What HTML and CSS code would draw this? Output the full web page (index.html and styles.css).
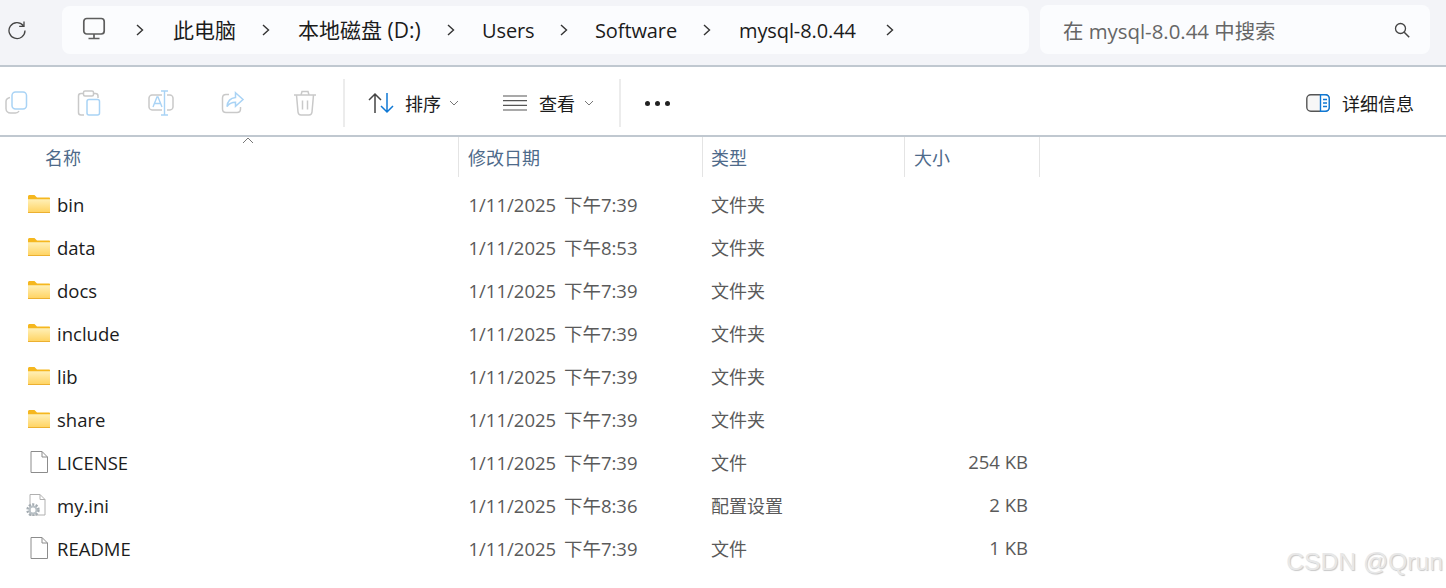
FILE: index.html
```html
<!DOCTYPE html>
<html lang="zh">
<head>
<meta charset="utf-8">
<title>mysql-8.0.44</title>
<link rel="stylesheet" href="styles.css">
</head>
<body>
<svg class="defs" width="0" height="0" aria-hidden="true">
  <defs>
    <linearGradient id="fg" x1="0" y1="0" x2="0" y2="1">
      <stop offset="0" stop-color="#fff0b8"/><stop offset="1" stop-color="#ffd25e"/>
    </linearGradient>
    <symbol id="folder" viewBox="0 0 22 18">
      <path d="M0 3V1.500C0 .7.700 0 1.500 0h5L9 2.500h12c.6 0 1 .4 1 1V5H0z" fill="#f5b71f"/>
      <path d="M0 4.200h22V17c0 .6-.4 1-1 1H1c-.6 0-1-.4-1-1z" fill="url(#fg)"/>
      <path d="M0 17h22v1H0z" fill="#ecb030"/>
    </symbol>
    <symbol id="file" viewBox="0 0 18 22">
      <path d="M1 .5h11l5.500 5.500v15.500H1z" fill="#fff" stroke="#8c8c8c"/>
      <path d="M12 .5v5.500h5.500" fill="none" stroke="#8c8c8c"/>
    </symbol>
    <symbol id="ini" viewBox="0 0 20 22">
      <path d="M4 .5h10l5 5v15.500H4z" fill="#fff" stroke="#b0b0b0"/>
      <path d="M14 .5v5h5" fill="none" stroke="#b0b0b0"/>
      <circle cx="7" cy="16" r="5.200" fill="none" stroke="#a4acb2" stroke-width="3" stroke-dasharray="2 1.300"/>
      <circle cx="7" cy="16" r="3.500" fill="none" stroke="#b8c0c5" stroke-width="2"/>
    </symbol>
  </defs>
</svg>

<header class="topbar">
  <svg class="refresh" width="20" height="20" viewBox="0 0 20 20"><path d="M16.200 5.500A8 8 0 1 0 18 10.500M17 1.500v4.800h-4.800" fill="none" stroke="#444" stroke-width="1.300"/></svg>
  <nav class="address">
    <svg class="pc" width="24" height="24" viewBox="0 0 24 24"><rect x="1.800" y="1.500" width="20.400" height="15.500" rx="3" fill="none" stroke="#5d5d5d" stroke-width="1.700"/><path d="M12 17v4M6.500 21.500h11" stroke="#5d5d5d" stroke-width="1.700" fill="none"/></svg>
    <svg class="chev first" width="8" height="12" viewBox="0 0 8 12"><path d="M1 1l5.500 5L1 11" fill="none" stroke="#333" stroke-width="1.400"/></svg>
    <span class="crumb c1">此电脑</span>
    <svg class="chev" width="8" height="12" viewBox="0 0 8 12"><path d="M1 1l5.500 5L1 11" fill="none" stroke="#333" stroke-width="1.400"/></svg>
    <span class="crumb c2">本地磁盘 (D:)</span>
    <svg class="chev" width="8" height="12" viewBox="0 0 8 12"><path d="M1 1l5.500 5L1 11" fill="none" stroke="#333" stroke-width="1.400"/></svg>
    <span class="crumb c3">Users</span>
    <svg class="chev" width="8" height="12" viewBox="0 0 8 12"><path d="M1 1l5.500 5L1 11" fill="none" stroke="#333" stroke-width="1.400"/></svg>
    <span class="crumb c4">Software</span>
    <svg class="chev" width="8" height="12" viewBox="0 0 8 12"><path d="M1 1l5.500 5L1 11" fill="none" stroke="#333" stroke-width="1.400"/></svg>
    <span class="crumb c5">mysql-8.0.44</span>
    <svg class="chev" width="8" height="12" viewBox="0 0 8 12"><path d="M1 1l5.500 5L1 11" fill="none" stroke="#333" stroke-width="1.400"/></svg>
  </nav>
  <div class="search">
    <span class="placeholder">在 mysql-8.0.44 中搜索</span>
    <svg width="18" height="18" viewBox="0 0 18 18"><circle cx="7.500" cy="7.500" r="5" fill="none" stroke="#444" stroke-width="1.300"/><path d="M11.200 11.200l5 5" stroke="#444" stroke-width="1.500"/></svg>
  </div>
</header>

<section class="toolbar">
  <div class="tool-group">
    <svg class="tool t-copy" width="24" height="24" viewBox="0 0 24 24"><rect x="7" y="1" width="14.500" height="17" rx="3.500" fill="none" stroke="#a9d3f5" stroke-width="1.500"/><path d="M5 6.500C2.500 7 1 8.500 1 10.500v7C1 20 3 22 5.500 22h5c2 0 3-1 3.500-2" fill="none" stroke="#c9c9c9" stroke-width="1.500"/></svg>
    <svg class="tool t-paste" width="24" height="26" viewBox="0 0 24 26"><path d="M7 3.500H4C2.500 3.500 1.500 4.500 1.500 6v16.500C1.500 24 2.500 25 4 25h3M17 3.500h1.500c1.500 0 2.500 1 2.500 2.500v2" fill="none" stroke="#c9c9c9" stroke-width="1.500"/><rect x="6.500" y="1" width="10" height="5" rx="1.500" fill="none" stroke="#c9c9c9" stroke-width="1.500"/><rect x="10" y="9.500" width="12.500" height="15.500" rx="2" fill="none" stroke="#a9d3f5" stroke-width="1.500"/></svg>
    <svg class="tool t-rename" width="26" height="26" viewBox="0 0 26 26"><path d="M14 5H4C2.500 5 1 6.500 1 8v9c0 1.500 1.500 3 3 3h10M19 5h3c1.500 0 3 1.500 3 3v9c0 1.500-1.500 3-3 3h-3" fill="none" stroke="#c9c9c9" stroke-width="1.500"/><path d="M13 1h7M13 25h7M16.500 1v24M5 17l4-10h1l4 10M6.500 13.500h6" fill="none" stroke="#a9d3f5" stroke-width="1.400"/></svg>
    <svg class="tool t-share" width="24" height="24" viewBox="0 0 24 24"><path d="M8 3.500H5C3 3.500 1.500 5 1.500 7v11c0 2 1.500 3.500 3.500 3.500h11c2 0 3.500-1.500 3.500-3.500v-2" fill="none" stroke="#c9c9c9" stroke-width="1.500"/><path d="M14.500 1.800L22 8.500l-7.500 6.700v-4c-4 0-6.500 1.300-8.500 4.300.5-5 3.500-8.500 8.500-9z" fill="none" stroke="#a9d3f5" stroke-width="1.500"/></svg>
    <svg class="tool t-trash" width="24" height="26" viewBox="0 0 24 26"><path d="M1 5h22M8 5l1-3.500h6L16 5M3.500 5l1.500 17c.2 2 1.500 3 3 3h8c1.500 0 2.800-1 3-3l1.500-17M9.500 10.500v9M14.500 10.500v9" fill="none" stroke="#c9c9c9" stroke-width="1.500"/></svg>
  </div>
  <span class="divider d1"></span>
  <div class="cmd sort">
    <svg width="26" height="22" viewBox="0 0 26 22"><path d="M7 21V2M1 8l6-6 6 6" fill="none" stroke="#444" stroke-width="1.500"/><path d="M19 1v19M13 14l6 6 6-6" fill="none" stroke="#0f78d4" stroke-width="1.500"/></svg>
    <span>排序</span>
    <svg class="caret" width="10" height="6" viewBox="0 0 10 6"><path d="M1 1l4 4 4-4" fill="none" stroke="#777" stroke-width="1"/></svg>
  </div>
  <div class="cmd view">
    <svg width="24" height="16" viewBox="0 0 24 16"><path d="M0 1h24M0 5.700h24M0 10.300h24M0 15h24" stroke="#555" stroke-width="1.200"/></svg>
    <span>查看</span>
    <svg class="caret" width="10" height="6" viewBox="0 0 10 6"><path d="M1 1l4 4 4-4" fill="none" stroke="#777" stroke-width="1"/></svg>
  </div>
  <span class="divider d2"></span>
  <div class="more"><i></i><i></i><i></i></div>
  <div class="details">
    <svg width="24" height="18" viewBox="0 0 24 18"><rect x=".8" y=".8" width="22.400" height="16.400" rx="4" fill="#f7f7f7" stroke="#555" stroke-width="1.400"/><path d="M14.500.8H19c2.500 0 4.200 1.700 4.200 4v8.400c0 2.300-1.700 4-4.200 4h-4.500z" fill="#fff" stroke="#0f78d4" stroke-width="1.400"/><path d="M17 5.500h4M17 9h4M17 12.500h4" stroke="#0f78d4" stroke-width="1.300"/></svg>
    <span>详细信息</span>
  </div>
</section>

<main class="list">
  <div class="head">
    <div class="hcell hname">名称<svg class="sortmark" width="12" height="7" viewBox="0 0 12 7"><path d="M1 6l5-5 5 5" fill="none" stroke="#777" stroke-width="1"/></svg></div>
    <div class="hcell">修改日期</div>
    <div class="hcell hthird">类型</div>
    <div class="hcell">大小</div>
  </div>
  <div class="row"><div class="name"><svg class="ico" width="22" height="18"><use href="#folder"/></svg><span>bin</span></div><div class="date">1/11/2025 下午7:39</div><div class="type">文件夹</div><div class="size"></div></div>
  <div class="row"><div class="name"><svg class="ico" width="22" height="18"><use href="#folder"/></svg><span>data</span></div><div class="date">1/11/2025 下午8:53</div><div class="type">文件夹</div><div class="size"></div></div>
  <div class="row"><div class="name"><svg class="ico" width="22" height="18"><use href="#folder"/></svg><span>docs</span></div><div class="date">1/11/2025 下午7:39</div><div class="type">文件夹</div><div class="size"></div></div>
  <div class="row"><div class="name"><svg class="ico" width="22" height="18"><use href="#folder"/></svg><span>include</span></div><div class="date">1/11/2025 下午7:39</div><div class="type">文件夹</div><div class="size"></div></div>
  <div class="row"><div class="name"><svg class="ico" width="22" height="18"><use href="#folder"/></svg><span>lib</span></div><div class="date">1/11/2025 下午7:39</div><div class="type">文件夹</div><div class="size"></div></div>
  <div class="row"><div class="name"><svg class="ico" width="22" height="18"><use href="#folder"/></svg><span>share</span></div><div class="date">1/11/2025 下午7:39</div><div class="type">文件夹</div><div class="size"></div></div>
  <div class="row"><div class="name"><svg class="ico file" width="18" height="22"><use href="#file"/></svg><span>LICENSE</span></div><div class="date">1/11/2025 下午7:39</div><div class="type">文件</div><div class="size">254 KB</div></div>
  <div class="row"><div class="name"><svg class="ico ini" width="20" height="22"><use href="#ini"/></svg><span>my.ini</span></div><div class="date">1/11/2025 下午8:36</div><div class="type">配置设置</div><div class="size">2 KB</div></div>
  <div class="row"><div class="name"><svg class="ico file" width="18" height="22"><use href="#file"/></svg><span>README</span></div><div class="date">1/11/2025 下午7:39</div><div class="type">文件</div><div class="size">1 KB</div></div>
</main>
<div class="watermark">CSDN @Qrun</div>
</body>
</html>
```

FILE: styles.css
```css
* { box-sizing: border-box; }
html, body { margin: 0; padding: 0; }
body {
  width: 1446px;
  height: 588px;
  overflow: hidden;
  background: #fff;
  position: relative;
  font-family: "Open Sans", "Noto Sans CJK SC", sans-serif;
  color: #1b1b1b;
}
.defs { position: absolute; }
.topbar {
  height: 67px;
  background: #f3f4f8;
  border-bottom: 2px solid #c0c8d0;
  display: flex;
  align-items: flex-start;
  padding: 6px 16px 0 7px;
}
.refresh { margin: 14px 35px 0 0; flex: none; }
.address {
  width: 967px;
  height: 48px;
  background: #fbfcfe;
  border-radius: 8px;
  display: flex;
  align-items: center;
  padding-left: 20px;
  font-size: 20px;
  flex: none;
}
.pc { flex: none; margin-top: -2px; }
.chev { flex: none; }
.chev.first { margin-left: 30px; }
.crumb { white-space: nowrap; line-height: 48px; letter-spacing: -.1px; padding-top: 1px; }
.c1 { margin: 0 25px 0 29px; width: 64px; font-size: 21px; letter-spacing: 0; padding-top: 0; }
.c2 { margin: 0 28px 0 28px; width: 121px; font-size: 21px; letter-spacing: 0; padding-top: 0; }
.c3 { margin: 0 29px 0 27px; width: 49px; }
.c4 { margin: 0 27px 0 27px; width: 81px; }
.c5 { margin: 0 30px 0 28px; width: 117px; }
.search {
  margin-left: 11px;
  width: 390px;
  height: 49px;
  margin-top: -1px;
  background: #fbfcfe;
  border-radius: 8px;
  display: flex;
  align-items: center;
  justify-content: space-between;
  padding: 0 19px 0 23px;
  font-size: 20.4px;
}
.placeholder { color: #666; }
.toolbar {
  height: 70px;
  border-bottom: 2px solid #c0c8d0;
  display: flex;
  align-items: center;
  padding-top: 4px;
  font-size: 18px;
}
.tool-group { display: flex; align-items: center; width: 343px; flex: none; }
.tool { flex: none; }
.t-copy { margin-left: 5px; }
.t-paste { margin-left: 48px; }
.t-rename { margin-left: 47px; }
.t-share { margin-left: 47px; }
.t-trash { margin-left: 48px; }
.divider { width: 2px; height: 48px; background: #ececec; flex: none; }
.cmd { display: flex; align-items: center; flex: none; }
.sort { margin-left: 23px; width: 135px; }
.sort span { margin-left: 11px; }
.sort .caret { margin-left: 8px; }
.view { width: 116px; }
.view span { margin-left: 12px; }
.view .caret { margin-left: 9px; }
.more { display: flex; gap: 5px; margin-left: 24px; flex: none; }
.more i { width: 5px; height: 5px; border-radius: 50%; background: #222; display: block; }
.details { margin-left: auto; margin-right: 32px; display: flex; align-items: center; gap: 12px; }
.list { font-size: 18px; }
.head, .row {
  display: grid;
  grid-template-columns: 459px 244px 202px 135px;
}
.head { grid-template-rows: 40px; }
.hcell {
  height: 40px;
  color: #4e6a8a;
  padding-left: 9px;
  border-right: 1px solid #e4e4e4;
  line-height: 43px;
  position: relative;
}
.hname { padding-left: 45px; }
.hthird { padding-left: 8px; }
.sortmark { position: absolute; left: 242px; top: 0; }
.row {
  height: 43px;
  align-items: center;
  color: #5a5a5a;
}
.head + .row { margin-top: 5px; }
.name { display: flex; align-items: center; padding-left: 28px; color: #1b1b1b; font-size: 18.5px; }
.name span { padding-top: 2px; }
.ico { flex: none; margin-right: 7px; }
.ico.file { margin: 0 9px 0 2px; }
.ico.ini { margin: 0 11px 0 -2px; }
.date { padding-left: 9.500px; font-size: 18.5px; word-spacing: 3px; }
.type { padding-left: 8px; }
.size { text-align: right; padding-right: 12px; font-size: 18.5px; }
.watermark {
  position: absolute;
  right: 3px;
  bottom: 11px;
  font-family: "Liberation Sans", sans-serif;
  font-size: 24.700px;
  color: #e8e8e8;
  text-shadow: 1px 1px 1px #c8c8c8;
  line-height: 30px;
  white-space: nowrap;
}
```
